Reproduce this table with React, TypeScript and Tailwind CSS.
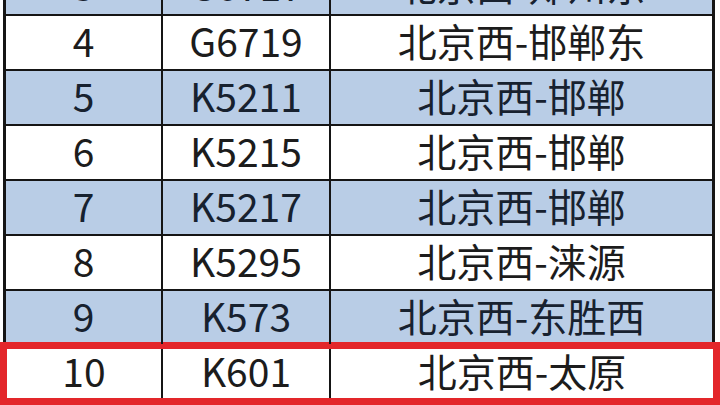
import React from 'react';

const rows = [
  { no: '3', train: 'G6717', route: '北京西-郑州东' },
  { no: '4', train: 'G6719', route: '北京西-邯郸东' },
  { no: '5', train: 'K5211', route: '北京西-邯郸' },
  { no: '6', train: 'K5215', route: '北京西-邯郸' },
  { no: '7', train: 'K5217', route: '北京西-邯郸' },
  { no: '8', train: 'K5295', route: '北京西-涞源' },
  { no: '9', train: 'K573', route: '北京西-东胜西' },
];

function Cells({ no, train, route }: { no: string; train: string; route: string }) {
  return (
    <>
      <div className="flex w-[157px] items-center justify-center border-r-2 border-[#151515] pb-[4px]">{no}</div>
      <div className="flex w-[168px] items-center justify-center border-r-2 border-[#151515] pb-[4px]">{train}</div>
      <div className="flex flex-1 items-center justify-center pb-[4px]">{route}</div>
    </>
  );
}

export default function App() {
  return (
    <div
      className="h-[405px] w-[720px] overflow-hidden bg-white text-[39px] leading-none text-[#1c1c1c]"
      style={{ fontFamily: '"Noto Sans CJK SC", "Noto Sans", sans-serif' }}
    >
      <div className="-mt-[41px] ml-[3px] w-[712px] border-x-[3px] border-[#151515]">
        {rows.map((r, i) => (
          <div
            key={r.no}
            className={`flex h-[55px] ${i === 0 ? '' : 'border-t-2 border-[#151515]'} ${
              i % 2 === 0 ? 'bg-[#b9cde6] text-[#17212f]' : 'bg-white'
            }`}
          >
            <Cells {...r} />
          </div>
        ))}
      </div>
      <div className="-mt-[2px] flex h-[65px] w-[720px] border-[7px] border-b-[9px] border-[#e3262a] bg-white">
        <div className="flex w-[156px] items-center justify-center border-r-2 border-[#151515] pb-[6px]">10</div>
        <div className="flex w-[168px] items-center justify-center border-r-2 border-[#151515] pb-[6px]">K601</div>
        <div className="flex flex-1 items-center justify-center pb-[6px]">北京西-太原</div>
      </div>
    </div>
  );
}
